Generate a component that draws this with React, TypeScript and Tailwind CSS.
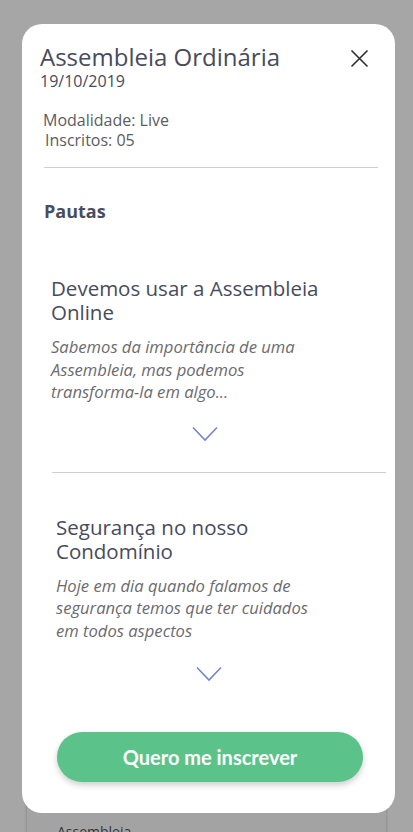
import React from "react";

const Chevron = () => (
  <svg width="26" height="16" viewBox="0 0 26 16" fill="none">
    <path d="M1 1.5 L13 14 L25 1.5" stroke="#7286c9" strokeWidth="1.6" />
  </svg>
);

export default function App() {
  return (
    <div
      className="relative h-[832px] w-full overflow-hidden bg-[#a6a6a6]"
      style={{ fontFamily: '"Open Sans", "Noto Sans", sans-serif' }}
    >
      {/* page behind the overlay */}
      <div className="mx-[27px] mt-[790px] h-[60px] bg-[#a3a3a3] shadow-[0_0_3px_rgba(0,0,0,0.25)] pl-[30px] pt-[34px] text-[14px] leading-[16px] text-[#333]">
        Assembleia
      </div>

      {/* modal */}
      <div className="absolute left-[22px] top-[24px] flex h-[789px] w-[373px] flex-col rounded-[20px] bg-white">
        <div className="flex items-start justify-between pl-[18px] pr-[26px] pt-[19px]">
          <div>
            <div className="text-[24px] leading-[28px] text-[#474b5c]">Assembleia Ordinária</div>
            <div className="text-[16px] leading-[20px] text-[#474b5c]">19/10/2019</div>
          </div>
          <svg className="mt-[6px]" width="19" height="19" viewBox="0 0 19 19" fill="none">
            <path d="M1.5 1.5 L17.5 17.5 M17.5 1.5 L1.5 17.5" stroke="#2b2b2b" strokeWidth="1.6" />
          </svg>
        </div>

        <div className="mt-[19px] pl-[21px] text-[16px] leading-[20px] text-[#5c5c62]">
          <div>Modalidade: Live</div>
          <div className="pl-[2px]">Inscritos: 05</div>
        </div>

        <div className="ml-[22px] mt-[17px] h-px w-[334px] bg-[#cfcfcf]" />

        <div className="ml-[22px] mt-[31px] text-[18px] font-bold leading-[24px] text-[#4a4d5e]">Pautas</div>

        <div className="ml-[29px] mt-[53px] w-[278px]">
          <div className="text-[20.5px] leading-[24px] text-[#474b5c]">Devemos usar a Assembleia Online</div>
          <div className="mt-[12px] text-[16.6px] italic leading-[22.5px] text-[#6b6b70]">
            Sabemos da importância de uma Assembleia, mas podemos transforma-la em algo...
          </div>
        </div>
        <div className="ml-[170px] mt-[22px] flex">
          <Chevron />
        </div>

        <div className="ml-[30px] mt-[30px] h-px w-[334px] bg-[#cfcfcf]" />

        <div className="ml-[34px] mt-[42px] w-[278px]">
          <div className="text-[20.5px] leading-[24px] text-[#474b5c]">Segurança no nosso Condomínio</div>
          <div className="mt-[12px] text-[16.6px] italic leading-[22.5px] text-[#6b6b70]">
            Hoje em dia quando falamos de segurança temos que ter cuidados em todos aspectos
          </div>
        </div>
        <div className="ml-[174px] mt-[24px] flex">
          <Chevron />
        </div>

        <div className="mt-auto flex justify-center pb-[31px] pl-[3px]">
          <button
            className="h-[50px] w-[306px] rounded-full bg-[#5bc389] text-[20px] font-bold text-white shadow-[0_3px_6px_rgba(0,0,0,0.2)]"
            style={{ fontFamily: "Lato, sans-serif" }}
          >
            Quero me inscrever
          </button>
        </div>
      </div>
    </div>
  );
}
